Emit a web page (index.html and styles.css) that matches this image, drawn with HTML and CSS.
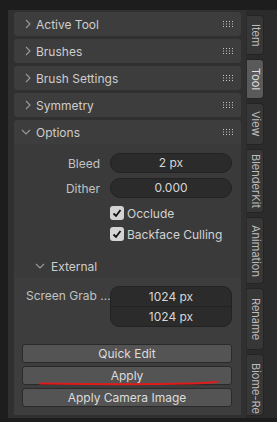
FILE: index.html
```html
<!DOCTYPE html>
<html>
<head>
    <meta charset="UTF-8">
    <title>Tool Panel</title>
    <link rel="stylesheet" href="styles.css">
</head>
<body>
    <div class="screen">
        <!-- Sidebar region -->
        <div class="region">
            <div class="panel-header">
                <svg class="chev" width="10" height="10" viewBox="0 0 10 10"><polyline points="3,1 7,5 3,9"/></svg>
                <span>Active Tool</span>
                <svg class="grip" width="12" height="6" viewBox="0 0 12 6"><use href="#dots"/></svg>
            </div>
            <div class="panel-header">
                <svg class="chev" width="10" height="10" viewBox="0 0 10 10"><polyline points="3,1 7,5 3,9"/></svg>
                <span>Brushes</span>
                <svg class="grip" width="12" height="6" viewBox="0 0 12 6"><use href="#dots"/></svg>
            </div>
            <div class="panel-header">
                <svg class="chev" width="10" height="10" viewBox="0 0 10 10"><polyline points="3,1 7,5 3,9"/></svg>
                <span>Brush Settings</span>
                <svg class="grip" width="12" height="6" viewBox="0 0 12 6"><use href="#dots"/></svg>
            </div>
            <div class="panel-header">
                <svg class="chev" width="10" height="10" viewBox="0 0 10 10"><polyline points="3,1 7,5 3,9"/></svg>
                <span>Symmetry</span>
                <svg class="grip" width="12" height="6" viewBox="0 0 12 6"><use href="#dots"/></svg>
            </div>

            <!-- Options panel (open) -->
            <div class="panel open">
                <div class="panel-header">
                    <svg class="chev down" width="10" height="10" viewBox="0 0 10 10"><polyline points="1,3 5,7 9,3"/></svg>
                    <span>Options</span>
                    <svg class="grip" width="12" height="6" viewBox="0 0 12 6"><use href="#dots"/></svg>
                </div>
                <div class="panel-body">
                    <div class="prop-row">
                        <label class="prop-label">Bleed</label>
                        <div class="field">2 px</div>
                    </div>
                    <div class="prop-row">
                        <label class="prop-label">Dither</label>
                        <div class="field">0.000</div>
                    </div>
                    <div class="check-row first">
                        <span class="checkbox"><svg width="12" height="12" viewBox="0 0 12 12"><polyline points="2.5,6.5 5,9 9.5,3"/></svg></span>
                        <span>Occlude</span>
                    </div>
                    <div class="check-row">
                        <span class="checkbox"><svg width="12" height="12" viewBox="0 0 12 12"><polyline points="2.5,6.5 5,9 9.5,3"/></svg></span>
                        <span>Backface Culling</span>
                    </div>

                    <div class="sub-header">
                        <svg class="chev down" width="10" height="10" viewBox="0 0 10 10"><polyline points="1,3 5,7 9,3"/></svg>
                        <span>External</span>
                    </div>
                </div>
                <div class="sub-body">
                    <div class="grab-row">
                        <label class="grab-label">Screen Grab ...</label>
                        <div class="field-stack">
                            <div class="field-part">1024 px</div>
                            <div class="field-part">1024 px</div>
                        </div>
                    </div>
                    <div class="buttons">
                        <button class="btn">Quick Edit</button>
                        <button class="btn">Apply</button>
                        <button class="btn">Apply Camera Image</button>
                    </div>
                </div>
            </div>
        </div>

        <!-- Tabs -->
        <div class="tabs">
            <div class="tab" style="height: 40px;">Item</div>
            <div class="tab active" style="height: 40px;">Tool</div>
            <div class="tab" style="height: 42px;">View</div>
            <div class="tab" style="height: 64px;">BlenderKit</div>
            <div class="tab" style="height: 67px;">Animation</div>
            <div class="tab" style="height: 62px;">Rename</div>
            <div class="tab tab-cut" style="height: 62px;">Biome-Re</div>
        </div>
    </div>

    <!-- red pen stroke over the Apply button -->
    <svg class="scribble" width="277" height="422" viewBox="0 0 277 422">
        <path d="M40 383.6 C90 384.2 150 384.4 190 383.6 C205 383.2 213 382.6 217.5 381.6"/>
    </svg>

    <svg width="0" height="0" style="position:absolute">
        <defs>
            <g id="dots">
                <rect x="1" y="0" width="1" height="1"/><rect x="4" y="0" width="1" height="1"/><rect x="7" y="0" width="1" height="1"/><rect x="10" y="0" width="1" height="1"/>
                <rect x="1" y="2.5" width="1" height="1"/><rect x="4" y="2.5" width="1" height="1"/><rect x="7" y="2.5" width="1" height="1"/><rect x="10" y="2.5" width="1" height="1"/>
                <rect x="1" y="5" width="1" height="1"/><rect x="4" y="5" width="1" height="1"/><rect x="7" y="5" width="1" height="1"/><rect x="10" y="5" width="1" height="1"/>
            </g>
        </defs>
    </svg>
</body>
</html>
```

FILE: styles.css
```css
body {
    margin: 0;
    padding: 0;
    background-color: #1d1d1d;
    font-family: Inter, "DejaVu Sans", sans-serif;
    font-size: 12px;
    color: #d0d0d0;
    overflow: hidden;
}

.screen {
    display: flex;
    width: 269px;
    height: 408px;
    margin-top: 10px;
    margin-left: 8px;
}

/* Sidebar region */
.region {
    width: 238px;
    background-color: #303030;
    padding: 2px 5px 0 6px;
    box-sizing: border-box;
    display: flex;
    flex-direction: column;
    flex-shrink: 0;
}

.panel-header {
    height: 24px;
    background-color: #3d3d3d;
    border-radius: 3px;
    margin-bottom: 3px;
    display: flex;
    align-items: center;
    padding-left: 9px;
    padding-right: 7px;
    box-sizing: border-box;
    color: #cdcdcd;
    flex-shrink: 0;
}

.panel-header span {
    flex-grow: 1;
    margin-left: 3px;
}

.chev {
    fill: none;
    stroke: #9a9a9a;
    stroke-width: 1.1;
}

.chev.down {
    margin-left: -2px;
    margin-right: 2px;
}

.grip {
    fill: #c8c8c8;
}

.panel.open {
    flex-grow: 1;
    display: flex;
    flex-direction: column;
    margin-bottom: 3px;
}

.panel.open .panel-header {
    margin-bottom: 0;
    border-radius: 3px 3px 0 0;
}

.panel-body {
    background-color: #3a3a3a;
    padding: 9px 9px 0 0;
}

.prop-row {
    display: flex;
    align-items: center;
    height: 20px;
    margin-bottom: 5px;
}

.prop-label {
    width: 86px;
    text-align: right;
    margin-right: 10px;
    color: #c2c2c2;
}

.field {
    flex-grow: 1;
    height: 20px;
    line-height: 18px;
    box-sizing: border-box;
    background-color: #2b2b2b;
    border: 1px solid #222222;
    border-radius: 10px;
    text-align: center;
    color: #d6d6d6;
}

.check-row {
    display: flex;
    align-items: center;
    height: 20px;
    margin-left: 96px;
    margin-top: 1px;
    color: #d2d2d2;
}

.check-row.first {
    margin-top: 0;
}

.checkbox {
    width: 14px;
    height: 14px;
    background-color: #d4d4d4;
    border-radius: 3px;
    margin-right: 3px;
    display: flex;
    align-items: center;
    justify-content: center;
}

.checkbox svg {
    fill: none;
    stroke: #111111;
    stroke-width: 1.8;
}

.sub-header {
    height: 24px;
    margin-top: 10px;
    display: flex;
    align-items: center;
    padding-left: 23px;
    color: #cdcdcd;
}

.sub-header span {
    margin-left: 4px;
}

.sub-body {
    flex-grow: 1;
    background-color: #3d3d3d;
    padding: 8px 9px 0 8px;
}

.grab-row {
    display: flex;
    align-items: flex-start;
}

.grab-label {
    width: 84px;
    padding-left: 4px;
    line-height: 20px;
    color: #c2c2c2;
    white-space: nowrap;
}

.field-stack {
    flex-grow: 1;
    background-color: #2b2b2b;
    border: 1px solid #222222;
    border-radius: 9px;
    overflow: hidden;
}

.field-part {
    height: 19px;
    line-height: 19px;
    text-align: center;
    color: #d6d6d6;
}

.field-part + .field-part {
    border-top: 1px solid #222222;
}

.buttons {
    display: flex;
    flex-direction: column;
    gap: 3px;
    margin-top: 17px;
}

.btn {
    height: 19px;
    padding: 0;
    background-color: #545454;
    border: 1px solid #2a2a2a;
    border-radius: 3px;
    color: #dcdcdc;
    font-family: inherit;
    font-size: 12px;
}

/* Tabs column */
.tabs {
    width: 31px;
    background-color: #2b2b2b;
    padding: 5px 0 0 1px;
    box-sizing: border-box;
    display: flex;
    flex-direction: column;
    gap: 4px;
    overflow: hidden;
    flex-shrink: 0;
}

.tab {
    width: 17px;
    box-sizing: border-box;
    background-color: #373737;
    border: 1px solid #242424;
    border-left: none;
    border-radius: 0 4px 4px 0;
    writing-mode: vertical-rl;
    text-align: center;
    font-size: 11px;
    line-height: 15px;
    color: #bcbcbc;
    flex-shrink: 0;
    overflow: hidden;
    white-space: nowrap;
}

.tab.active {
    background-color: #5a5a5a;
    color: #e0e0e0;
}

.tab-cut {
    text-align: start;
    padding-top: 8px;
}

.scribble {
    position: absolute;
    left: 0;
    top: 0;
    pointer-events: none;
}

.scribble path {
    fill: none;
    stroke: #e01b1b;
    stroke-width: 2;
    stroke-linecap: round;
}
```
